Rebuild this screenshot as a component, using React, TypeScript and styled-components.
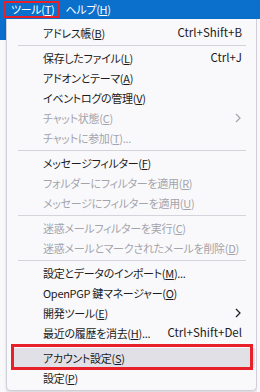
import styled, { createGlobalStyle } from "styled-components";

const GlobalStyle = createGlobalStyle`
  html, body {
    margin: 0;
    padding: 0;
    background: #f0f0f4;
  }
  body {
    width: 260px;
    height: 392px;
    overflow: hidden;
    font-family: "Noto Sans CJK JP", "Noto Sans", sans-serif;
    font-size: 11px;
    letter-spacing: -0.3px;
    font-feature-settings: "palt";
    color: #1c1b22;
  }
`;

type Entry =
  | {
      kind: "item";
      label: string;
      accel: string;
      suffix?: string;
      shortcut?: string;
      disabled?: boolean;
      submenu?: boolean;
      marked?: boolean;
    }
  | { kind: "sep" };

const entries: Entry[] = [
  { kind: "item", label: "アドレス帳", accel: "B", shortcut: "Ctrl+Shift+B" },
  { kind: "sep" },
  { kind: "item", label: "保存したファイル", accel: "L", shortcut: "Ctrl+J" },
  { kind: "item", label: "アドオンとテーマ", accel: "A" },
  { kind: "item", label: "イベントログの管理", accel: "V" },
  { kind: "item", label: "チャット状態", accel: "C", disabled: true, submenu: true },
  { kind: "item", label: "チャットに参加", accel: "T", suffix: "...", disabled: true },
  { kind: "sep" },
  { kind: "item", label: "メッセージフィルター", accel: "F" },
  { kind: "item", label: "フォルダーにフィルターを適用", accel: "R", disabled: true },
  { kind: "item", label: "メッセージにフィルターを適用", accel: "U", disabled: true },
  { kind: "sep" },
  { kind: "item", label: "迷惑メールフィルターを実行", accel: "C", disabled: true },
  { kind: "item", label: "迷惑メールとマークされたメールを削除", accel: "D", disabled: true },
  { kind: "sep" },
  { kind: "item", label: "設定とデータのインポート", accel: "M", suffix: "..." },
  { kind: "item", label: "OpenPGP 鍵マネージャー", accel: "O" },
  { kind: "item", label: "開発ツール", accel: "E", submenu: true },
  { kind: "item", label: "最近の履歴を消去", accel: "H", suffix: "...", shortcut: "Ctrl+Shift+Del" },
  { kind: "sep" },
  { kind: "item", label: "アカウント設定", accel: "S", marked: true },
  { kind: "item", label: "設定", accel: "P" },
];

const Page = styled.div`
  display: flex;
  flex-direction: column;
  width: 260px;
  height: 392px;
`;

const MenuBar = styled.div`
  display: flex;
  align-items: center;
  height: 19px;
  padding-left: 3px;
  background: #0b6fcc;
  color: #ffffff;
`;

const MenuTitle = styled.div<{ $marked?: boolean }>`
  box-sizing: border-box;
  height: 17px;
  display: flex;
  align-items: center;
  padding: ${(p) => (p.$marked ? "0 2px 0 6px" : "0 7px")};
  border: ${(p) => (p.$marked ? "2px solid #e8202a" : "none")};
  line-height: 1;
`;

const Body = styled.div`
  flex: 1;
  display: flex;
  min-height: 0;
`;

const SideStrip = styled.div<{ $w: number }>`
  width: ${(p) => p.$w}px;
  display: flex;
  flex-direction: column;
  background: #f9f9fb;
`;

const BehindTab = styled.div`
  height: 21px;
  background: #0b6fcc;
`;

const Panel = styled.div`
  box-sizing: border-box;
  width: 251px;
  align-self: flex-start;
  padding: 4px 1px 2px;
  background: #f9f9fb;
  border: 1px solid #cfcfd8;
  border-top: none;
  border-radius: 0 0 5px 5px;
  box-shadow: 0 1px 3px rgba(0, 0, 0, 0.12);
`;

const Item = styled.div<{ $disabled?: boolean; $marked?: boolean }>`
  position: relative;
  display: flex;
  align-items: center;
  height: 20px;
  padding: 0 13px 0 ${(p) => (p.$marked ? "32px" : "35px")};
  margin-left: ${(p) => (p.$marked ? "3px" : "0")};
  color: ${(p) => (p.$disabled ? "#a4a4ab" : "#1c1b22")};
  background: ${(p) => (p.$marked ? "#e0e0e6" : "transparent")};
  white-space: nowrap;
  line-height: 1;

  ${(p) =>
    p.$marked &&
    `
    &::after {
      content: "";
      position: absolute;
      left: 0;
      right: 2px;
      top: -4px;
      bottom: -2px;
      border: 3px solid #e8202a;
    }
  `}
`;

const Accel = styled.span`
  text-decoration: underline;
  text-underline-offset: 1px;
`;

const Shortcut = styled.span`
  margin-left: auto;
  padding-left: 6px;
  font-size: 11.5px;
  letter-spacing: 0;
`;

const Chevron = styled.svg`
  margin-left: auto;
  margin-right: 1px;
`;

const Separator = styled.div`
  height: 1px;
  margin: 2px 9px 2px 10px;
  background: #d4d4da;
`;

export default function App() {
  return (
    <>
      <GlobalStyle />
      <Page>
        <MenuBar>
          <MenuTitle $marked>
            ツール(<Accel>T</Accel>)
          </MenuTitle>
          <MenuTitle>
            ヘルプ(<Accel>H</Accel>)
          </MenuTitle>
        </MenuBar>
        <Body>
          <SideStrip $w={6}>
            <BehindTab />
          </SideStrip>
          <Panel>
            {entries.map((e, i) =>
              e.kind === "sep" ? (
                <Separator key={i} />
              ) : (
                <Item key={i} $disabled={e.disabled} $marked={e.marked}>
                  <span>
                    {e.label}(<Accel>{e.accel}</Accel>){e.suffix}
                  </span>
                  {e.shortcut && <Shortcut>{e.shortcut}</Shortcut>}
                  {e.submenu && (
                    <Chevron width="6" height="10" viewBox="0 0 6 10">
                      <path
                        d="M1 1l4 4-4 4"
                        fill="none"
                        stroke="currentColor"
                        strokeWidth="1.2"
                      />
                    </Chevron>
                  )}
                </Item>
              )
            )}
          </Panel>
          <SideStrip $w={3} />
        </Body>
      </Page>
    </>
  );
}
